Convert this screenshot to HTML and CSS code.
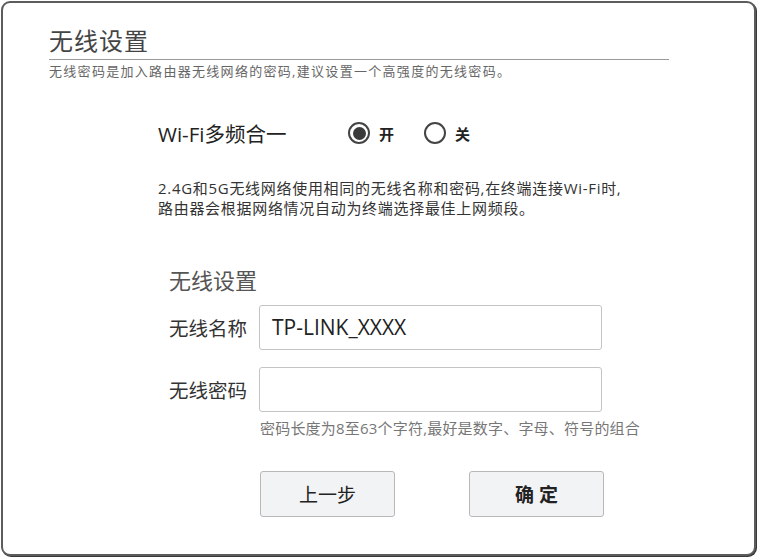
FILE: index.html
```html
<!DOCTYPE html>
<html lang="zh-CN">
<head>
<meta charset="utf-8">
<title>无线设置</title>
<link rel="stylesheet" href="styles.css">
</head>
<body>
<div class="frame">
  <div class="head">
    <h1 class="title">无线设置</h1>
  </div>
  <p class="subtitle">无线密码是加入路由器无线网络的密码,建议设置一个高强度的无线密码。</p>

  <div class="band-row">
    <span class="band-label">Wi-Fi多频合一</span>
    <label class="radio"><span class="dot on"></span><span class="radio-text">开</span></label>
    <label class="radio"><span class="dot"></span><span class="radio-text">关</span></label>
  </div>
  <p class="desc">2.4G和5G无线网络使用相同的无线名称和密码,在终端连接Wi-Fi时,<br>路由器会根据网络情况自动为终端选择最佳上网频段。</p>

  <div class="form">
    <h2 class="section">无线设置</h2>
    <div class="field">
      <span class="label">无线名称</span>
      <div class="input">TP-LINK_XXXX</div>
    </div>
    <div class="field field2">
      <span class="label">无线密码</span>
      <div class="input"></div>
    </div>
    <p class="hint">密码长度为8至63个字符,最好是数字、字母、符号的组合</p>
    <div class="buttons">
      <button class="btn">上一步</button>
      <button class="btn btn-ok">确 定</button>
    </div>
  </div>
</div>
</body>
</html>
```
FILE: styles.css
```css
html, body {
  margin: 0;
  padding: 0;
  background: #ffffff;
}
body {
  font-family: "Open Sans", "Noto Sans CJK SC", "Noto Sans", sans-serif;
  color: #333;
}
.frame {
  margin: 1px;
  width: 755px;
  height: 555px;
  box-sizing: border-box;
  border: 2px solid #5c5c5c;
  border-radius: 9px;
  box-shadow: 1px 1px 0 #3a3a3a;
  padding: 23px 0 0 46px;
  background: #fff;
}
.head {
  width: 620px;
  border-bottom: 1px solid #9a9a9a;
  padding-bottom: 3px;
}
.title {
  margin: 0;
  font-weight: normal;
  font-size: 24px;
  line-height: 30px;
  letter-spacing: 1px;
  color: #444;
}
.subtitle {
  margin: 2px 0 0 0;
  font-size: 13px;
  line-height: 18px;
  letter-spacing: 1.3px;
  color: #666;
}
.band-row {
  margin: 41px 0 0 109px;
  display: flex;
  align-items: center;
  height: 24px;
}
.band-label {
  width: 190px;
  font-size: 20.5px;
  color: #222;
}
.radio {
  display: flex;
  align-items: center;
  margin-right: 30px;
}
.dot {
  width: 22px;
  height: 22px;
  box-sizing: border-box;
  border: 2px solid #444;
  border-radius: 50%;
  display: flex;
  align-items: center;
  justify-content: center;
}
.dot.on::after {
  content: "";
  width: 13px;
  height: 13px;
  border-radius: 50%;
  background: #3a3a3a;
}
.radio-text {
  margin-left: 9px;
  font-size: 15px;
  font-weight: bold;
  color: #222;
}
.desc {
  margin: 33px 0 0 109px;
  font-size: 15px;
  line-height: 20px;
  letter-spacing: 0.7px;
  color: #333;
}
.form {
  margin: 48px 0 0 120px;
}
.section {
  margin: 0;
  font-weight: normal;
  font-size: 22px;
  line-height: 28px;
  color: #555;
}
.field {
  margin-top: 11px;
  display: flex;
  align-items: center;
}
.field2 {
  margin-top: 17px;
}
.label {
  width: 90px;
  font-size: 19.5px;
  color: #333;
}
.input {
  width: 343px;
  height: 45px;
  box-sizing: border-box;
  border: 1px solid #c4c4c4;
  border-radius: 3px;
  padding-left: 12px;
  font-size: 21px;
  line-height: 43px;
  color: #222;
}
.hint {
  margin: 6px 0 0 91px;
  font-size: 15px;
  line-height: 20px;
  letter-spacing: 0.2px;
  color: #777;
}
.buttons {
  margin: 33px 0 0 91px;
  display: flex;
  gap: 74px;
}
.btn {
  width: 135px;
  height: 46px;
  border: 1px solid #b8b8b8;
  border-radius: 3px;
  background: #f2f3f5;
  font-family: "Open Sans", "Noto Sans CJK SC", sans-serif;
  font-size: 19px;
  color: #222;
  padding: 0;
}
.btn-ok {
  font-weight: 600;
}
```
